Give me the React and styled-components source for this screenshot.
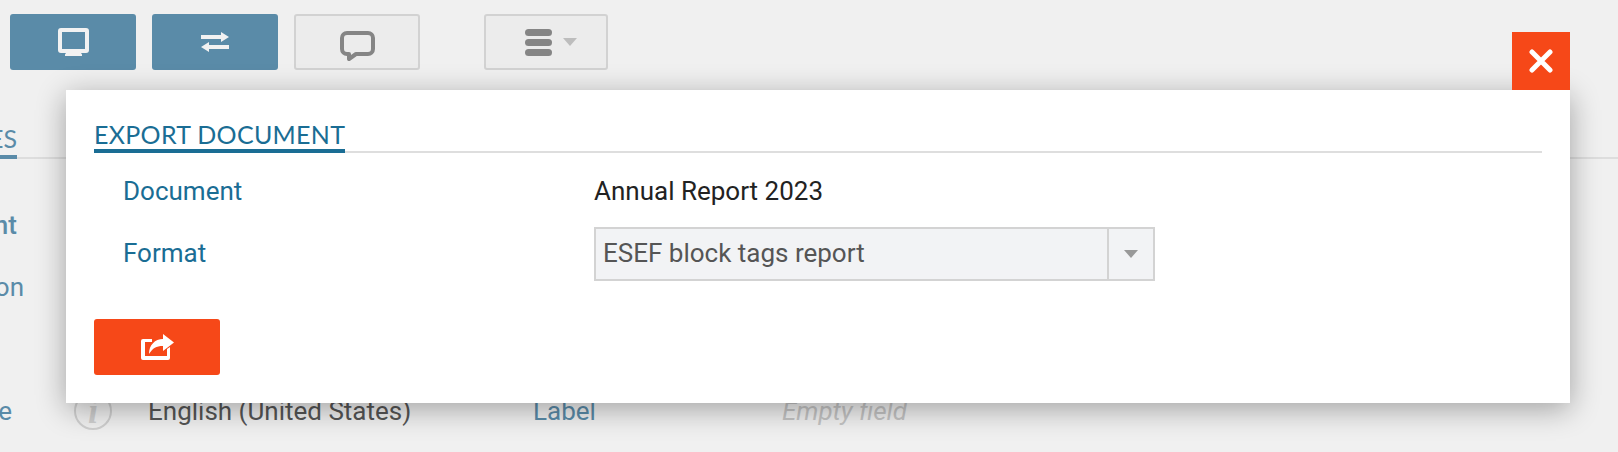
import React from "react";
import styled, { createGlobalStyle } from "styled-components";

const GlobalStyle = createGlobalStyle`
  html, body {
    margin: 0;
    height: 100%;
    background: #f0f0f0;
    overflow: hidden;
  }
`;

const Page = styled.div`
  position: relative;
  width: 1618px;
  height: 452px;
  overflow: hidden;
  background: #f0f0f0;
  font-family: Roboto, sans-serif;
`;

const Toolbar = styled.div`
  display: flex;
  padding: 14px 0 0 10px;
  height: 56px;
`;

const ToolButton = styled.button`
  display: flex;
  align-items: center;
  justify-content: center;
  gap: 11px;
  box-sizing: border-box;
  width: ${(p) => p.$width || 126}px;
  height: 56px;
  margin-left: ${(p) => p.$gap || 0}px;
  padding: 0 0 0 ${(p) => p.$indent || 0}px;
  border-radius: 3px;
  border: ${(p) => (p.$active ? "none" : "2px solid #d2d2d2")};
  background: ${(p) => (p.$active ? "#5a8ba8" : "#ececec")};
  color: ${(p) => (p.$active ? "#f2f2f2" : "#858585")};
`;

const Tabs = styled.div`
  margin-top: 54px;
  height: 33px;
  border-bottom: 2px solid #dddddd;
  display: flex;
  align-items: flex-start;
`;

const Tab = styled.div`
  width: 17px;
  height: 31px;
  overflow: hidden;
  display: flex;
  justify-content: flex-end;
  white-space: nowrap;
  font-family: Lato, sans-serif;
  font-size: 25px;
  line-height: 28px;
  color: #5a8ba8;
  border-bottom: 4px solid #5a8ba8;
`;

const SideRows = styled.div`
  display: flex;
  flex-direction: column;
`;

const SideLabel = styled.div`
  width: ${(p) => p.$width}px;
  margin-top: ${(p) => p.$top}px;
  height: 28px;
  overflow: hidden;
  display: flex;
  justify-content: flex-end;
  white-space: nowrap;
  font-size: 26px;
  line-height: 28px;
  font-weight: ${(p) => (p.$strong ? 500 : 400)};
  color: #5a8ba8;
`;

const LanguageRow = styled.div`
  display: flex;
  align-items: center;
  margin-top: 90px;
  height: 40px;
`;

const InfoBadge = styled.span`
  display: flex;
  align-items: center;
  justify-content: center;
  width: 34px;
  height: 34px;
  margin-left: 62px;
  border: 2px solid #cfcfcf;
  border-radius: 50%;
  font-family: "Liberation Serif", serif;
  font-style: italic;
  font-weight: 700;
  font-size: 36px;
  color: #cfcfcf;
`;

const LanguageValue = styled.span`
  margin-left: 36px;
  width: 385px;
  font-size: 26px;
  color: #555555;
`;

const LanguageLabel = styled.span`
  width: 249px;
  font-size: 26px;
  color: #5a8ba8;
`;

const EmptyField = styled.span`
  font-size: 26px;
  font-style: italic;
  color: #c4c4c4;
`;

const Modal = styled.div`
  position: absolute;
  left: 66px;
  top: 90px;
  width: 1504px;
  height: 313px;
  box-sizing: border-box;
  padding: 32px 28px 0;
  background: #ffffff;
  box-shadow: 0 6px 28px rgba(0, 0, 0, 0.33);
`;

const CloseButton = styled.button`
  position: absolute;
  right: 0;
  top: -58px;
  width: 58px;
  height: 58px;
  padding: 0;
  border: none;
  display: flex;
  align-items: center;
  justify-content: center;
  background: #f64818;
`;

const TitleBar = styled.div`
  height: 29px;
  border-bottom: 2px solid #dedede;
`;

const Title = styled.span`
  display: inline-block;
  height: 27px;
  font-family: Lato, sans-serif;
  font-size: 25px;
  letter-spacing: 0.3px;
  line-height: 24px;
  color: #1a6d94;
  border-bottom: 4px solid #1a6d94;
`;

const FormRow = styled.div`
  display: flex;
  align-items: center;
  height: ${(p) => p.$height}px;
  margin-top: ${(p) => p.$top || 0}px;
`;

const FieldLabel = styled.div`
  width: 471px;
  padding: 0 0 ${(p) => p.$lift || 0}px 29px;
  font-size: 26px;
  color: #1a6d94;
`;

const FieldValue = styled.div`
  font-size: 26px;
  color: #222222;
`;

const Select = styled.div`
  display: flex;
  box-sizing: border-box;
  width: 561px;
  height: 54px;
  border: 2px solid #d3d3d3;
  background: #f2f3f5;
`;

const SelectValue = styled.div`
  flex: 1;
  padding-left: 7px;
  font-size: 26px;
  line-height: 48px;
  color: #555555;
`;

const SelectArrow = styled.div`
  display: flex;
  align-items: center;
  justify-content: center;
  width: 44px;
  border-left: 2px solid #d3d3d3;
`;

const ExportButton = styled.button`
  display: flex;
  align-items: center;
  justify-content: center;
  width: 126px;
  height: 56px;
  margin-top: 38px;
  padding: 0;
  border: none;
  border-radius: 3px;
  background: #f64818;
`;

const CommentGlyph = styled.svg`
  margin-top: 8px;
`;

const Caret = ({ color, w = 14, h = 8 }) => (
  <svg width={w} height={h} viewBox="0 0 14 8">
    <path d="M0 0h14L7 8z" fill={color} />
  </svg>
);

const MonitorIcon = () => (
  <svg width="31" height="28" viewBox="0 0 31 28" fill="currentColor">
    <path
      fillRule="evenodd"
      d="M3 0h25a3 3 0 0 1 3 3v19a3 3 0 0 1-3 3h-5l1 1.500V28H7v-1.500L8 25H3a3 3 0 0 1-3-3V3a3 3 0 0 1 3-3zm1 4v17h23V4z"
    />
  </svg>
);

const SwapIcon = () => (
  <svg width="28" height="20" viewBox="0 0 28 20" fill="currentColor">
    <path d="M0 3h20V0l8 5-8 5V7H0z" />
    <path d="M28 13H8v-3l-8 5 8 5v-3h20z" />
  </svg>
);

const CommentIcon = () => (
  <CommentGlyph width="35" height="30" viewBox="0 0 35 30" fill="none">
    <path
      d="M7 2h21a5 5 0 0 1 5 5v11a5 5 0 0 1-5 5H16l-7 5v-5H7a5 5 0 0 1-5-5V7a5 5 0 0 1 5-5z"
      stroke="#858585"
      strokeWidth="4"
      strokeLinejoin="round"
    />
  </CommentGlyph>
);

const MenuIcon = () => (
  <svg width="27" height="27" viewBox="0 0 27 27" fill="#858585">
    <rect width="27" height="7" y="0" rx="3.500" />
    <rect width="27" height="7" y="10" rx="3.500" />
    <rect width="27" height="7" y="20" rx="3.500" />
  </svg>
);

const ShareIcon = () => (
  <svg width="33" height="26" viewBox="0 0 33 26" fill="#ffffff">
    <path d="M2 5h9v3H4v14h22v-7l3-2v11a2 2 0 0 1-2 2H2a2 2 0 0 1-2-2V7a2 2 0 0 1 2-2z" />
    <path d="M22 0l11 8.500L22 17v-5c-7 0-10 2-14 8 0-9 6-15 14-15z" />
  </svg>
);

const CloseIcon = () => (
  <svg width="24" height="24" viewBox="0 0 24 24">
    <path d="M3 3l18 18M21 3L3 21" stroke="#ffffff" strokeWidth="5" strokeLinecap="round" />
  </svg>
);

export default function App() {
  return (
    <Page>
      <GlobalStyle />
      <Toolbar>
        <ToolButton $active>
          <MonitorIcon />
        </ToolButton>
        <ToolButton $active $gap={16}>
          <SwapIcon />
        </ToolButton>
        <ToolButton $gap={16}>
          <CommentIcon />
        </ToolButton>
        <ToolButton $gap={64} $width={124} $indent={10}>
          <MenuIcon />
          <Caret color="#bdbdbd" />
        </ToolButton>
      </Toolbar>
      <Tabs>
        <Tab>PROPERTIES</Tab>
      </Tabs>
      <SideRows>
        <SideLabel $width={17} $top={52} $strong>
          Document
        </SideLabel>
        <SideLabel $width={24} $top={34}>
          Translation
        </SideLabel>
      </SideRows>
      <LanguageRow>
        <SideLabel $width={12} $top={0}>
          Language
        </SideLabel>
        <InfoBadge>i</InfoBadge>
        <LanguageValue>English (United States)</LanguageValue>
        <LanguageLabel>Label</LanguageLabel>
        <EmptyField>Empty field</EmptyField>
      </LanguageRow>
      <Modal>
        <CloseButton>
          <CloseIcon />
        </CloseButton>
        <TitleBar>
          <Title>EXPORT DOCUMENT</Title>
        </TitleBar>
        <FormRow $height={38} $top={19}>
          <FieldLabel>Document</FieldLabel>
          <FieldValue>Annual Report 2023</FieldValue>
        </FormRow>
        <FormRow $height={54} $top={17}>
          <FieldLabel $lift={2}>Format</FieldLabel>
          <Select>
            <SelectValue>ESEF block tags report</SelectValue>
            <SelectArrow>
              <Caret color="#999999" />
            </SelectArrow>
          </Select>
        </FormRow>
        <ExportButton>
          <ShareIcon />
        </ExportButton>
      </Modal>
    </Page>
  );
}
